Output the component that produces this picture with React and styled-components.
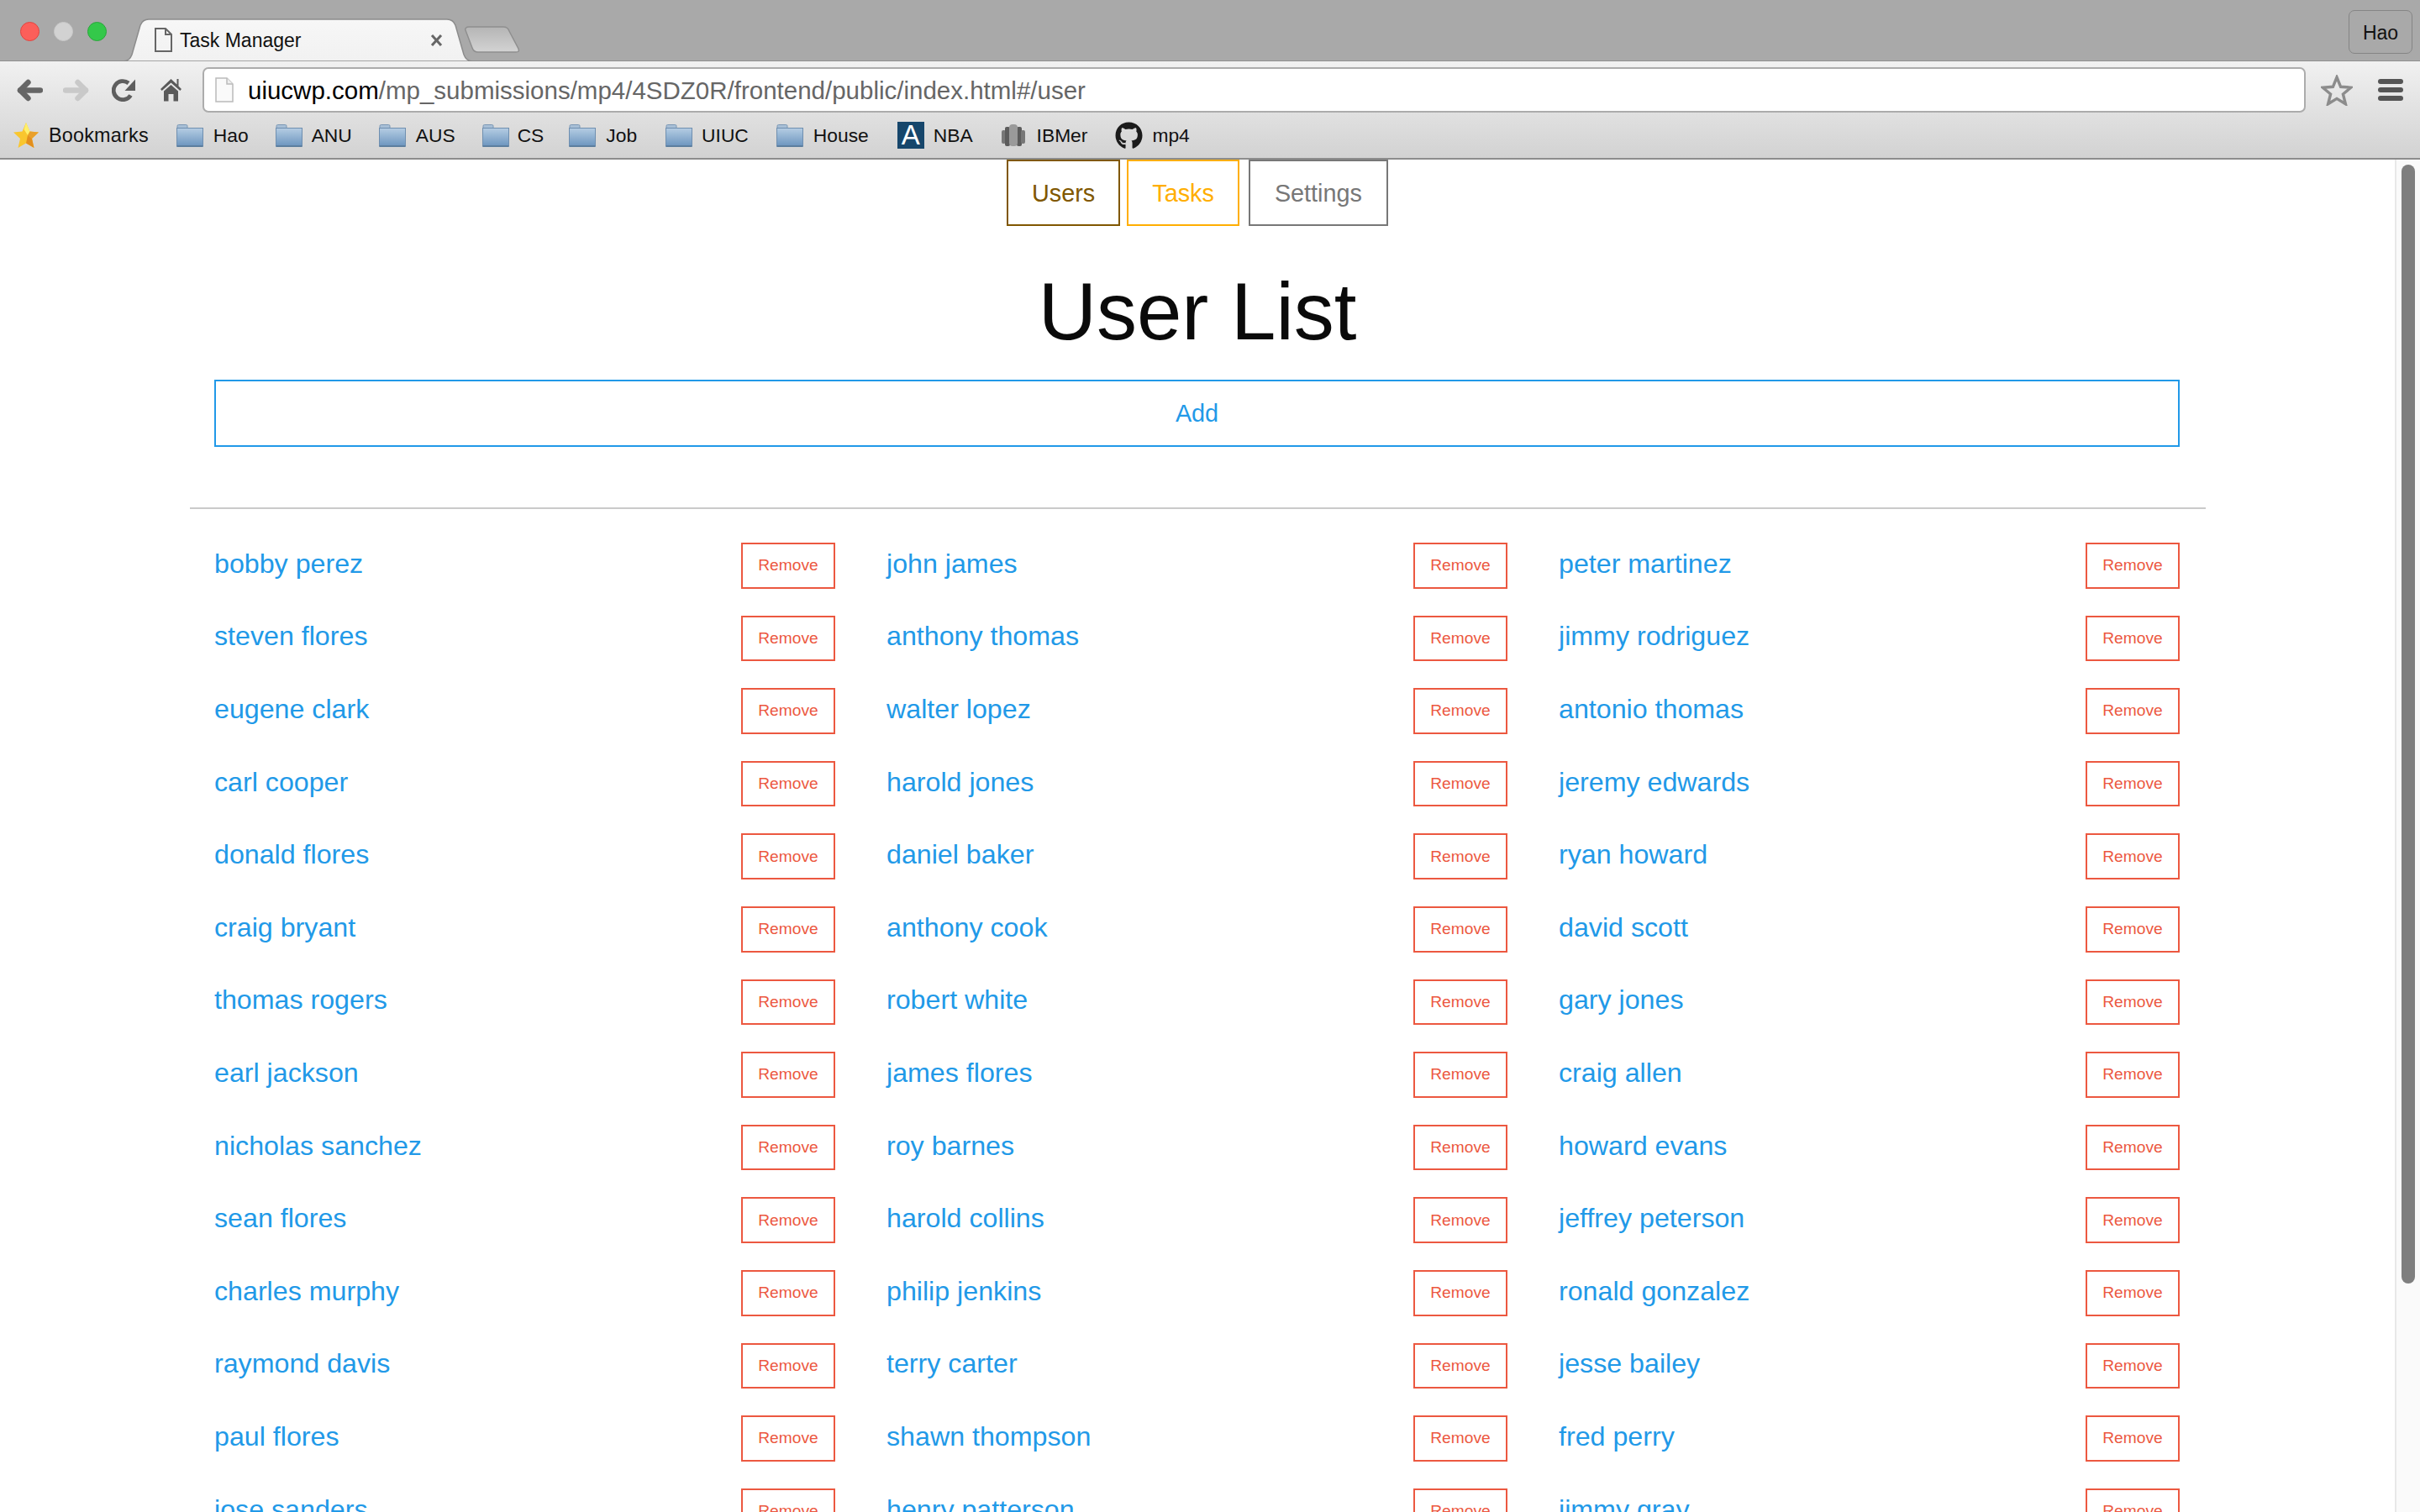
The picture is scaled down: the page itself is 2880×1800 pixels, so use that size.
import React from 'react';
import styled, { createGlobalStyle } from 'styled-components';
import { FaGithub } from 'react-icons/fa';

const Global = createGlobalStyle`
  html, body { margin: 0; padding: 0; height: 100%; background: #fff; }
  body { font-family: "Liberation Sans", Arial, sans-serif; }
  * { box-sizing: border-box; }
`;

const Page = styled.div`
  width: 2880px; height: 1800px; overflow: hidden;
  display: flex; flex-direction: column;
`;
const TabBar = styled.div`
  height: 73px; flex: none; background: #a9a9a9; border-bottom: 1px solid #8f8f8f;
  display: flex; align-items: flex-end; padding-left: 24px;
`;
const Lights = styled.div`
  display: flex; gap: 17px; align-self: flex-start; margin-top: 26px; width: 123px;
`;
const Light = styled.span`
  width: 23px; height: 23px; border-radius: 50%;
  background: ${p => p.$c}; border: 1px solid ${p => p.$b};
`;
const Tab = styled.div`
  position: relative; width: 415px; height: 51px; margin-bottom: -1px; flex: none;
  display: flex; align-items: center; padding: 0 35px 0 37px; gap: 9px;
  font-size: 23px; color: #111;
`;
const TabShape = styled.svg`
  position: absolute; inset: 0; width: 100%; height: 100%;
`;
const TabDoc = styled.svg`position: relative; flex: none;`;
const TabTitle = styled.span`position: relative; flex: 1; padding-top: 1px;`;
const TabClose = styled.svg`position: relative; flex: none;`;
const NewTab = styled.svg`flex: none; margin: 0 0 9px -9px;`;
const Profile = styled.div`
  margin: 0 9px 8px auto; width: 76px; height: 52px; align-self: flex-end;
  border: 1px solid #858585; border-radius: 7px; padding-top: 3px;
  display: flex; align-items: center; justify-content: center;
  font-size: 23px; color: #111;
`;
const ChromeTools = styled.div`
  flex: none; height: 117px; background: linear-gradient(#f1f1f1, #d2d2d2);
  border-bottom: 2px solid #8c8c8c; display: flex; flex-direction: column;
`;
const Toolbar = styled.div`
  height: 61px; flex: none; padding: 7px 20px 0; display: flex; align-items: center;
`;
const ToolIcon = styled.svg`
  flex: none; margin-left: ${p => p.$ml || 0}px;
`;
const Address = styled.div`
  flex: 1; height: 54px; margin-left: 24px; background: #fff;
  border: 2px solid #acacac; border-radius: 7px;
  display: flex; align-items: center; padding-left: 13px; gap: 17px;
  font-size: 29.5px; color: #666; white-space: nowrap;
`;
const AddressText = styled.span`padding-top: 2px;`;
const Domain = styled.span`color: #000;`;
const Bookmarks = styled.div`
  flex: 1; display: flex; align-items: center; padding: 0 0 0 16px;
  font-size: 22.8px; color: #111;
`;
const Bookmark = styled.div`
  display: flex; align-items: center; white-space: nowrap;
  gap: ${p => p.$gap}px; margin-left: ${p => p.$ml || 0}px;
`;
const RootLabel = styled.span`font-size: 23.4px; letter-spacing: 0.2px;`;
const NbaIcon = styled.span`
  width: 32px; height: 32px; background: #16466b; color: #fff;
  display: flex; align-items: center; justify-content: center;
  font-size: 33px; line-height: 32px;
`;
const Github = styled(FaGithub)`color: #1b1b1b; font-size: 33px;`;

const Body = styled.div`flex: 1; min-height: 0; display: flex;`;
const Main = styled.main`flex: 1; min-width: 0; overflow: hidden;`;
const Track = styled.div`
  width: 30px; flex: none; background: #fafafa; border-left: 2px solid #e8e8e8;
  padding: 6px 6px 0;
`;
const Thumb = styled.div`height: 1332px; border-radius: 8px; background: #7f7f7f;`;

const Nav = styled.nav`display: flex; justify-content: center; gap: 8px;`;
const NavButton = styled.a`
  height: 79px; padding: 1px ${p => p.$pad || 28}px 0; margin-left: ${p => p.$ml || 0}px;
  border: 2px solid ${p => p.$c}; color: ${p => p.$c};
  display: flex; align-items: center; font-size: 28.8px;
`;
const Title = styled.h1`
  margin: 47px 0 0; height: 136px; text-align: center; font-weight: 400;
  font-size: 96px; line-height: 110px; color: #0a0a0a;
`;
const AddButton = styled.a`
  margin: 0 256px 0 255px; height: 80px; border: 2px solid #2199e8; color: #2199e8;
  display: flex; align-items: center; justify-content: center; font-size: 28.8px;
`;
const Divider = styled.hr`
  margin: 72px 225px 40px 226px; height: 2px; border: 0; background: #cacaca;
`;
const List = styled.div`
  margin-right: 225px; margin-left: 225px;
  display: grid; grid-template-columns: repeat(3, 1fr); grid-auto-rows: 86.6px;
`;
const Row = styled.div`
  padding: 0 31px 32px 30px; display: flex; align-items: center; justify-content: space-between;
`;
const Name = styled.a`color: #2199e8; font-size: 32.2px; margin-top: -4px;`;
const Remove = styled.a`
  width: 112px; height: 100%; border: 2px solid #ec5840; color: #ec5840;
  display: flex; align-items: center; justify-content: center; font-size: 19.2px;
`;

const names = [
  ['bobby perez', 'john james', 'peter martinez'],
  ['steven flores', 'anthony thomas', 'jimmy rodriguez'],
  ['eugene clark', 'walter lopez', 'antonio thomas'],
  ['carl cooper', 'harold jones', 'jeremy edwards'],
  ['donald flores', 'daniel baker', 'ryan howard'],
  ['craig bryant', 'anthony cook', 'david scott'],
  ['thomas rogers', 'robert white', 'gary jones'],
  ['earl jackson', 'james flores', 'craig allen'],
  ['nicholas sanchez', 'roy barnes', 'howard evans'],
  ['sean flores', 'harold collins', 'jeffrey peterson'],
  ['charles murphy', 'philip jenkins', 'ronald gonzalez'],
  ['raymond davis', 'terry carter', 'jesse bailey'],
  ['paul flores', 'shawn thompson', 'fred perry'],
  ['jose sanders', 'henry patterson', 'jimmy gray'],
].flat();

const Folder = () => (
  <svg width="32" height="27" viewBox="0 0 32 27">
    <defs>
      <linearGradient id="fold" x1="0" y1="0" x2="0" y2="1">
        <stop offset="0" stopColor="#b5cde3" />
        <stop offset="1" stopColor="#6c95bf" />
      </linearGradient>
    </defs>
    <path d="M1 5V2a1.5 1.5 0 0 1 1.5-1.5h9A1.5 1.5 0 0 1 13 2v3z" fill="#a8bfd6" stroke="#7c98b5" />
    <rect x="0.5" y="4.5" width="31" height="21.5" fill="url(#fold)" stroke="#6f8fb0" />
    <rect x="0.5" y="25" width="31" height="2" fill="#5d7f9f" />
  </svg>
);

const Arrow = ({ color, flip, ml }) => (
  <ToolIcon $ml={ml} width="31" height="27" viewBox="0 0 31 27">
    <g transform={flip ? 'matrix(-1 0 0 1 31 0)' : undefined} fill="none" stroke={color} strokeWidth="6.4" strokeLinecap="round" strokeLinejoin="round">
      <path d="M4 13.5H28" />
      <path d="M13.5 4 4 13.5 13.5 23" />
    </g>
  </ToolIcon>
);

const folders = [
  ['Hao', 12, 33],
  ['ANU', 11, 32],
  ['AUS', 12, 32],
  ['CS', 10, 32],
  ['Job', 12, 30],
  ['UIUC', 11, 34],
  ['House', 12, 33],
];

export default function App() {
  return (
    <Page>
      <Global />
      <TabBar>
        <Lights>
          <Light $c="#fc5f5a" $b="#e2443f" />
          <Light $c="#d2d2d2" $b="#c8c8c8" />
          <Light $c="#34c84a" $b="#2aa63b" />
        </Lights>
        <Tab>
          <TabShape viewBox="0 0 415 51" preserveAspectRatio="none">
            <defs>
              <linearGradient id="tabfill" x1="0" y1="0" x2="0" y2="1">
                <stop offset="0" stopColor="#f7f7f7" />
                <stop offset="1" stopColor="#f1f1f1" />
              </linearGradient>
            </defs>
            <path d="M0 51C6 50 8 48 10 43L20 8C22 3 25 1 30 1H385C390 1 393 3 395 8L405 43C407 48 409 50 415 51Z"
              fill="url(#tabfill)" stroke="#8c8c8c" strokeWidth="1.5" />
          </TabShape>
          <TabDoc width="21" height="29" viewBox="0 0 21 29">
            <path d="M1 1H13L20 8V28H1ZM13 1V8H20" fill="none" stroke="#666" strokeWidth="2" />
          </TabDoc>
          <TabTitle>Task Manager</TabTitle>
          <TabClose width="15" height="14" viewBox="0 0 15 14">
            <path d="M2 1 13 13M13 1 2 13" stroke="#666" strokeWidth="3" />
          </TabClose>
        </Tab>
        <NewTab width="66" height="32" viewBox="0 0 66 32">
          <defs>
            <linearGradient id="newfill" x1="0" y1="0" x2="0" y2="1">
              <stop offset="0" stopColor="#b5b5b5" />
              <stop offset="1" stopColor="#d3d3d3" />
            </linearGradient>
          </defs>
          <path d="M5 1H46C50 1 52 3 53 6L64 27C65 30 64 31 61 31H16C12 31 10 29 9 26L1 5C0 3 2 1 5 1Z"
            fill="url(#newfill)" stroke="#8f8f8f" strokeWidth="1.5" />
        </NewTab>
        <Profile>Hao</Profile>
      </TabBar>
      <ChromeTools>
        <Toolbar>
          <Arrow color="#666" />
          <Arrow color="#c9c9c9" flip ml={24} />
          <ToolIcon $ml={27} width="29" height="27" viewBox="0 0 29 27">
            <path d="M22.5 19.5A11 11 0 1 1 20 5" fill="none" stroke="#5e5e5e" strokeWidth="4.8" />
            <path d="M28 0.5V14H15.5z" fill="#5e5e5e" />
          </ToolIcon>
          <ToolIcon $ml={29} width="26" height="28" viewBox="0 0 26 28">
            <path d="M12.5 1 19.5 7.5V1H21.5V9.5L25 13 23.3 15 12.5 5.5 1.7 15 0 13zM4 15.5 12.5 8 21 15.5V27.5H15.5V19H9.5V27.5H4z" fill="#5a5a5a" />
          </ToolIcon>
          <Address>
            <svg width="22" height="30" viewBox="0 0 22 30">
              <path d="M1 1H14L21 8V29H1Z" fill="#fafafa" stroke="#bbb" strokeWidth="1.5" />
              <path d="M14 1V8H21" fill="#eee" stroke="#bbb" strokeWidth="1.5" />
            </svg>
            <AddressText><Domain>uiucwp.com</Domain>/mp_submissions/mp4/4SDZ0R/frontend/public/index.html#/user</AddressText>
          </Address>
          <ToolIcon $ml={18} width="38" height="37" viewBox="0 0 38 37">
            <path d="M19 3 23.6 14.3 35.8 15.2 26.4 23 29.4 34.8 19 28.4 8.6 34.8 11.6 23 2.2 15.2 14.4 14.3Z" fill="none" stroke="#8c8c8c" strokeWidth="3.4" />
          </ToolIcon>
          <ToolIcon $ml={30} width="30" height="26" viewBox="0 0 30 26">
            <rect y="0" width="30" height="6" rx="3" fill="#555" />
            <rect y="10" width="30" height="6" rx="3" fill="#555" />
            <rect y="20" width="30" height="6" rx="3" fill="#555" />
          </ToolIcon>
        </Toolbar>
        <Bookmarks>
          <Bookmark $gap={12}>
            <svg width="30" height="30" viewBox="0 0 30 30">
              <path d="M15 0 19.5 10.5 30 11.5 22 19 24.5 30 15 24.5 5.5 30 8 19 0 11.5 10.5 10.5Z" fill="#f9c62e" />
              <path d="M15 0 19.5 10.5 17 15 12.5 8Z" fill="#fff06a" />
              <path d="M17 15 19.5 10.5 30 11.5 22 19Z" fill="#e9a02c" />
              <path d="M17 15 22 19 24.5 30 15 24.5Z" fill="#e38f1e" />
            </svg>
            <RootLabel>Bookmarks</RootLabel>
          </Bookmark>
          {folders.map(([label, gap, ml]) => (
            <Bookmark key={label} $gap={gap} $ml={ml}><Folder />{label}</Bookmark>
          ))}
          <Bookmark $gap={11} $ml={34}><NbaIcon>A</NbaIcon>NBA</Bookmark>
          <Bookmark $gap={14} $ml={34}>
            <svg width="28" height="28" viewBox="0 0 28 28">
              <rect x="0" y="8" width="5" height="16" rx="2" fill="#777" />
              <rect x="4" y="4" width="6" height="23" rx="2" fill="#5c5c5c" />
              <rect x="18" y="4" width="6" height="23" rx="2" fill="#5c5c5c" />
              <rect x="23" y="8" width="5" height="16" rx="2" fill="#777" />
              <rect x="9" y="1" width="10" height="26" rx="4" fill="#9a9a9a" />
            </svg>
            IBMer
          </Bookmark>
          <Bookmark $gap={11} $ml={33}><Github />mp4</Bookmark>
        </Bookmarks>
      </ChromeTools>
      <Body>
        <Main>
          <Nav>
            <NavButton $c="#805700">Users</NavButton>
            <NavButton $c="#ffae00">Tasks</NavButton>
            <NavButton $c="#777" $ml={3} $pad={29}>Settings</NavButton>
          </Nav>
          <Title>User List</Title>
          <AddButton>Add</AddButton>
          <Divider />
          <List>
            {names.map(n => (
              <Row key={n}>
                <Name>{n}</Name>
                <Remove>Remove</Remove>
              </Row>
            ))}
          </List>
        </Main>
        <Track><Thumb /></Track>
      </Body>
    </Page>
  );
}
